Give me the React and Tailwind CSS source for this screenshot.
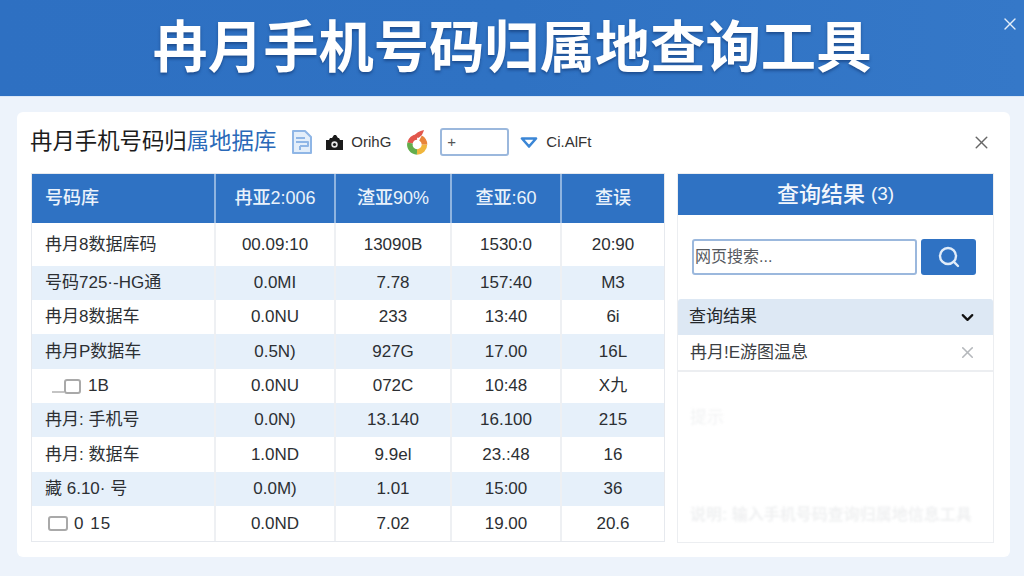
import { ChevronDown, Search, X } from "lucide-react";

const font = "font-['Liberation_Sans','Noto_Sans_CJK_SC',sans-serif]";

const columns = ["号码库", "冉亚2:006", "渣亚90%", "查亚:60", "查误"];

const rows = [
  { h: "h-[43px]", cells: ["冉月8数据库码", "00.09:10", "13090B", "1530:0", "20:90"] },
  { h: "h-[34px]", alt: true, cells: ["号码725·-HG通", "0.0MI", "7.78", "157:40", "M3"] },
  { h: "h-[34px]", cells: ["冉月8数据车", "0.0NU", "233", "13:40", "6i"] },
  { h: "h-[35px]", alt: true, cells: ["冉月P数据车", "0.5N)", "927G", "17.00", "16L"] },
  { h: "h-[34px]", cells: ["1B", "0.0NU", "072C", "10:48", "X九"], box: "small" },
  { h: "h-[34px]", alt: true, cells: ["冉月: 手机号", "0.0N)", "13.140", "16.100", "215"] },
  { h: "h-[35px]", cells: ["冉月: 数据车", "1.0ND", "9.9el", "23.:48", "16"] },
  { h: "h-[34px]", alt: true, cells: ["藏 6.10· 号", "0.0M)", "1.01", "15:00", "36"] },
  { h: "h-[35px]", cells: ["0 15", "0.0ND", "7.02", "19.00", "20.6"], box: "wide" },
];

function DocIcon() {
  return (
    <svg width="22" height="26" viewBox="0 0 22 26" fill="none" stroke="#8fb6e6" strokeWidth="2" strokeLinejoin="round">
      <path d="M2 2h12l6 6v16H2z" fill="#e3eefa" />
      <path d="M5 9h9M5 13h12v4H9M9 17v4" />
    </svg>
  );
}

function CameraIcon() {
  return (
    <svg width="19" height="17" viewBox="0 0 19 17">
      <path d="M1 6h3l1-2h2l2-3h2l2 3h1l1 2h3v10H1z" fill="#1b1b1b" />
      <circle cx="9.5" cy="10.5" r="3.2" fill="#e8e8e8" />
      <circle cx="9.5" cy="10.5" r="1.6" fill="#1b1b1b" />
    </svg>
  );
}

function RingLogo() {
  return (
    <svg width="24" height="26" viewBox="0 0 24 26" fill="none" strokeWidth="5.5">
      <path d="M12 8a7.5 7.5 0 0 0-7 6" stroke="#e2574c" />
      <path d="M5 14a7.5 7.5 0 0 0 7 9" stroke="#63ad4c" />
      <path d="M12 23a7.5 7.5 0 0 0 7.5-7.5" stroke="#f0b63c" />
      <path d="M19.5 15.5a7.5 7.5 0 0 0-4-6.5" stroke="#e8843a" />
      <path d="M9 7c2-3 5-5 10-6-1 3-2 6-6 8z" fill="#e2574c" stroke="none" />
    </svg>
  );
}

function DiamondIcon() {
  return (
    <svg width="18" height="12" viewBox="0 0 18 12" fill="none" stroke="#3b86d6" strokeWidth="2.6">
      <path d="M2 2.5h14l-7 8z" strokeLinejoin="round" />
    </svg>
  );
}

function Checkbox({ wide }) {
  return <span className={`inline-block h-[15px] rounded-[3px] border-2 border-[#a9a9a9] bg-white ${wide ? "w-[20px]" : "w-[17px]"}`} />;
}

function FirstCell({ row }) {
  if (row.box === "small") {
    return (
      <span className="flex items-center">
        <span className="ml-[7px] mt-[12px] h-[2px] w-[12px] bg-[#c4c4c4]" />
        <Checkbox />
        <span className="ml-[7px]">{row.cells[0]}</span>
      </span>
    );
  }
  if (row.box === "wide") {
    return (
      <span className="flex items-center gap-[6px] pl-[3px]">
        <Checkbox wide />
        <span className="tracking-[1px]">{row.cells[0]}</span>
      </span>
    );
  }
  return row.cells[0];
}

function DataTable() {
  return (
    <div className="w-[632px] shadow-[0_0_0_1px_#e6e9ee]">
      <div className="grid h-[49px] grid-cols-[182px_120px_116px_110px_1fr] bg-[#2f72c3] text-[18px] font-medium text-[#eaf2fb]">
        {columns.map((c, i) => (
          <div key={c} className={`flex items-center border-[#8fb4e0] ${i === 0 ? "pl-[13px]" : "justify-center border-l-2"}`}>
            {c}
          </div>
        ))}
      </div>
      {rows.map((row) => (
        <div
          key={row.cells[0]}
          className={`grid grid-cols-[182px_120px_116px_110px_1fr] text-[17px] text-[#2c2f33] ${row.h} ${row.alt ? "bg-[#e6f0fa]" : "bg-white"}`}
        >
          {row.cells.map((c, i) => (
            <div key={i} className={`flex items-center border-[#eef0f3] ${i === 0 ? "pl-[13px]" : "justify-center border-l-2"}`}>
              {i === 0 ? <FirstCell row={row} /> : c}
            </div>
          ))}
        </div>
      ))}
    </div>
  );
}

function ResultPanel() {
  return (
    <div className="flex h-[368px] w-[315px] flex-col bg-white shadow-[0_0_0_1px_#eceef1]">
      <div className="flex h-[41px] items-center justify-center bg-[#2f72c3] text-[22px] font-medium text-[#f2f6fc]">
        查询结果 <span className="ml-[6px] text-[19px]">(3)</span>
      </div>
      <div className="mt-[24px] flex gap-[4px] pl-[14px]">
        <div className="flex h-[36px] w-[225px] items-center rounded-[3px] border-2 border-[#9bb8dd] bg-white pl-[1px] text-[16px] text-[#55595e]">
          网页搜索...
        </div>
        <div className="flex h-[36px] w-[55px] items-center justify-center rounded-[3px] bg-[#2f72c3]">
          <Search size={24} color="#e1ecf9" strokeWidth={2.4} />
        </div>
      </div>
      <div className="mt-[24px] flex h-[36px] items-center justify-between rounded-t-[3px] bg-[#dde8f4] pl-[11px] pr-[16px] text-[17px] text-[#24272b]">
        查询结果
        <ChevronDown size={19} color="#111" strokeWidth={2.8} />
      </div>
      <div className="flex h-[37px] items-center justify-between border-b-2 border-[#eceef1] pl-[12px] pr-[16px] text-[17px] text-[#3b3e42]">
        冉月!E游图温息
        <X size={19} color="#b5b8bc" strokeWidth={2} />
      </div>
      <div className="ml-[12px] mt-[33px] text-[17px] text-[#f1f2f3] blur-[1px]">提示</div>
      <div className="ml-[12px] mt-[72px] text-[16px] font-bold text-[#f0f1f2] blur-[1px]">说明: 输入手机号码查询归属地信息工具</div>
    </div>
  );
}

export default function App() {
  return (
    <div className={`${font} h-[576px] w-[1024px] overflow-hidden bg-[#edf3fb]`}>
      <header className="relative flex h-[97px] items-center justify-center border-b border-[#dbe7f6] bg-gradient-to-r from-[#2e70c2] via-[#2f72c3] to-[#3578c8] pt-[2px]">
        <h1 className="text-[55.3px] font-bold leading-none text-white [text-shadow:0_2px_3px_rgba(20,60,120,0.7)]">
          冉月手机号码归属地查询工具
        </h1>
        <X className="absolute right-[4px] top-[14px]" size={20} color="#e3eefa" strokeWidth={1.6} />
      </header>

      <main className="mx-[17px] mt-[15px] h-[445px] w-[993px] rounded-[6px] bg-white px-[15px]">
        <div className="mb-[2px] flex h-[60px] items-center">
          <h2 className="ml-[-2px] whitespace-nowrap text-[22.4px] leading-none text-[#1c1c1c]">
            冉月手机号码归<span className="text-[#2a69b8]">属地据库</span>
          </h2>
          <span className="ml-[15px] flex"><DocIcon /></span>
          <span className="ml-[12px] flex"><CameraIcon /></span>
          <span className="ml-[7px] text-[15px] text-[#333]">OrihG</span>
          <span className="ml-[14px] flex"><RingLogo /></span>
          <div className="ml-[11px] flex h-[28px] w-[69px] items-center rounded-[3px] border-2 border-[#9bb8dd] pl-[5px] text-[15px] text-[#555]">+</div>
          <span className="ml-[11px] flex"><DiamondIcon /></span>
          <span className="ml-[8px] text-[15px] text-[#333]">Ci.AlFt</span>
          <X className="ml-auto mr-[3px]" size={21} color="#666" strokeWidth={1.7} />
        </div>
        <div className="flex items-start justify-between pr-[2px]">
          <DataTable />
          <ResultPanel />
        </div>
      </main>
    </div>
  );
}
